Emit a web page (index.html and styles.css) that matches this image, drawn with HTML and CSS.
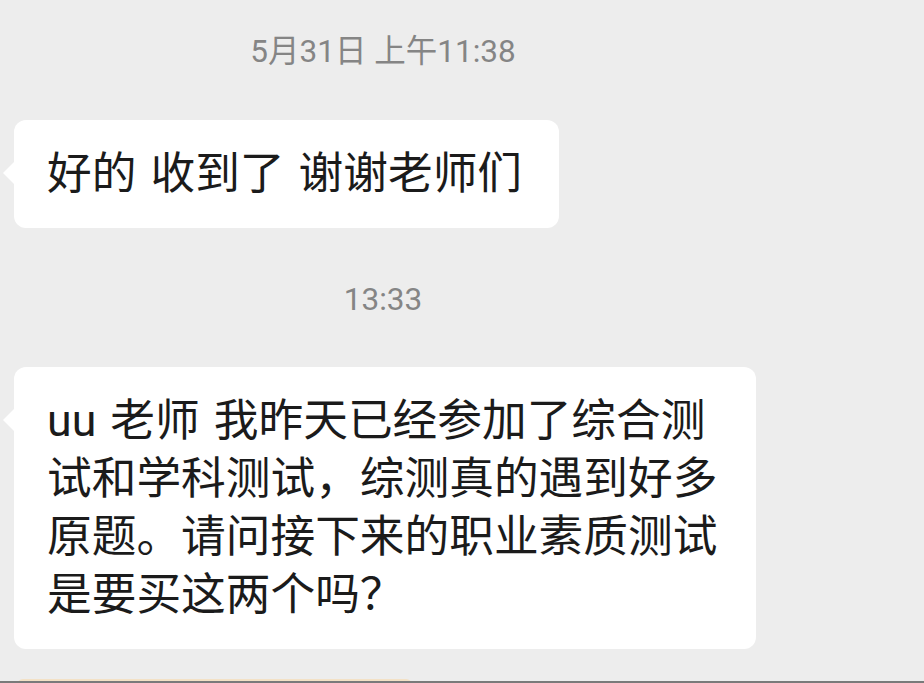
FILE: index.html
```html
<!doctype html>
<html lang="zh-CN">
  <head>
    <meta charset="utf-8" />
    <title>聊天记录</title>
    <link rel="stylesheet" href="styles.css">
  </head>
  <body>
<div class="chat">

  <div class="time">5月31日 上午11:38</div>

  <div class="bubble">好的 收到了 谢谢老师们</div>

  <div class="time">13:33</div>

  <div class="bubble">uu 老师 我昨天已经参加了综合测试和学科测试，综测真的遇到好多原题。请问接下来的职业素质测试是要买这两个吗？</div>

  <div class="card-msg"></div>

</div>
<div class="screen-edge"></div>
  </body>
</html>
```

FILE: styles.css
```css
html, body {
  margin: 0;
  height: 100%;
}

body {
  background-color: #ededed;
  font-family: Roboto, "Noto Sans CJK SC", sans-serif;
  overflow: hidden;
}

.chat {
  width: 766px;
  padding-top: 32px;
  padding-left: 14px;
  box-sizing: border-box;
}

.time {
  text-align: center;
  font-size: 31.5px;
  line-height: 40px;
  color: #858585;
  margin-left: -14px;
}

.bubble {
  position: relative;
  width: fit-content;
  max-width: 672px;
  background-color: #ffffff;
  border-radius: 12px;
  padding: 25px 37px 25px 33px;
  font-size: 44.7px;
  line-height: 58px;
  word-spacing: 3px;
  color: #1b1b1b;
  margin-top: 48px;
  margin-bottom: 52px;
}

.bubble::before {
  content: "";
  position: absolute;
  left: -11px;
  top: 41px;
  border-top: 12px solid transparent;
  border-bottom: 12px solid transparent;
  border-right: 12px solid #ffffff;
}

.time + .bubble + .time + .bubble {
  margin-top: 47px;
  margin-bottom: 0;
}

.card-msg {
  margin-top: 30px;
  margin-left: 3px;
  width: 395px;
  height: 4px;
  border-radius: 8px 8px 0 0;
  background-color: #c9a77b;
  border-top: 2px solid #f3e1c6;
}

.screen-edge {
  position: fixed;
  left: 0;
  right: 0;
  bottom: 0;
  height: 2px;
  background-color: #7a7a7a;
}
```
